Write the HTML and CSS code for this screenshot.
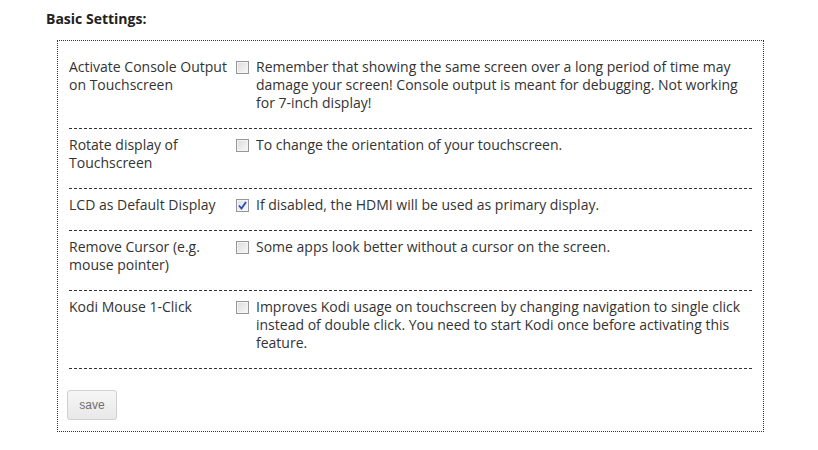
FILE: index.html
```html
<!DOCTYPE html>
<html lang="en">

<head>
    <meta charset="UTF-8">
    <meta name="viewport" content="width=device-width, initial-scale=1.0">
    <title>Basic Settings</title>
    <link rel="stylesheet" href="styles.css">
</head>

<body>
    <div class="page">
        <h3 class="section-title">Basic Settings:</h3>

        <form class="settings-box">
            <div class="settings-list">
                <div class="setting-row">
                    <label class="setting-label">Activate Console Output on Touchscreen</label>
                    <span class="checkbox"></span>
                    <p class="setting-desc">Remember that showing the same screen over a long period of time may damage your screen! Console output is meant for debugging. Not working for 7-inch display!</p>
                </div>

                <div class="setting-row">
                    <label class="setting-label">Rotate display of Touchscreen</label>
                    <span class="checkbox"></span>
                    <p class="setting-desc">To change the orientation of your touchscreen.</p>
                </div>

                <div class="setting-row">
                    <label class="setting-label">LCD as Default Display</label>
                    <span class="checkbox checked">
                        <svg width="9" height="9" viewBox="0 0 9 9"><path d="M1 4.5 L3.5 7.5 L8 1" fill="none" stroke="#2b4ab0" stroke-width="1.8"/></svg>
                    </span>
                    <p class="setting-desc">If disabled, the HDMI will be used as primary display.</p>
                </div>

                <div class="setting-row">
                    <label class="setting-label">Remove Cursor (e.g. mouse pointer)</label>
                    <span class="checkbox"></span>
                    <p class="setting-desc">Some apps look better without a cursor on the screen.</p>
                </div>

                <div class="setting-row">
                    <label class="setting-label">Kodi Mouse 1-Click</label>
                    <span class="checkbox"></span>
                    <p class="setting-desc">Improves Kodi usage on touchscreen by changing navigation to single click instead of double click. You need to start Kodi once before activating this feature.</p>
                </div>
            </div>

            <button type="button" class="save-btn">save</button>
        </form>
    </div>
</body>

</html>
```

FILE: styles.css
```css
body {
    font-family: "Open Sans", "Liberation Sans", sans-serif;
    font-size: 14px;
    line-height: 18px;
    color: #333;
    margin: 0;
    background: #fff;
}

.page {
    padding: 10px 0 0 46px;
}

.section-title {
    margin: 0 0 12px;
    font-size: 14px;
    line-height: 18px;
    font-weight: bold;
    color: #222;
}

.settings-box {
    width: 684px;
    margin-left: 11px;
    padding: 10px 11px 11px 10px;
    border: 1px dotted #333;
}

.settings-list {
    padding-left: 1px;
}

.setting-row {
    display: grid;
    grid-template-columns: 167px 20px 1fr;
    padding: 7px 0 16px;
    border-bottom: 1px dashed #333;
}

.setting-label {
    display: block;
    padding-right: 4px;
}

.setting-desc {
    margin: 0;
}

.checkbox {
    box-sizing: border-box;
    width: 13px;
    height: 13px;
    margin-top: 3px;
    border: 1px solid #979797;
    background: linear-gradient(135deg, #dcdcdc, #f8f8f8);
    box-shadow: inset 0 0 0 1px #f4f4f4;
    display: flex;
    align-items: center;
    justify-content: center;
}

.checkbox.checked {
    background: linear-gradient(135deg, #dfe3ea, #f6f7f9);
}

.save-btn {
    width: 50px;
    height: 30px;
    margin: 21px 0 0 -1px;
    padding: 0;
    font-family: "Liberation Sans", Arial, sans-serif;
    font-size: 12px;
    color: #6f6f6f;
    background: linear-gradient(#f6f6f6, #e8e8e8);
    border: 1px solid #d0d0d0;
    border-radius: 3px;
    display: block;
}
```
